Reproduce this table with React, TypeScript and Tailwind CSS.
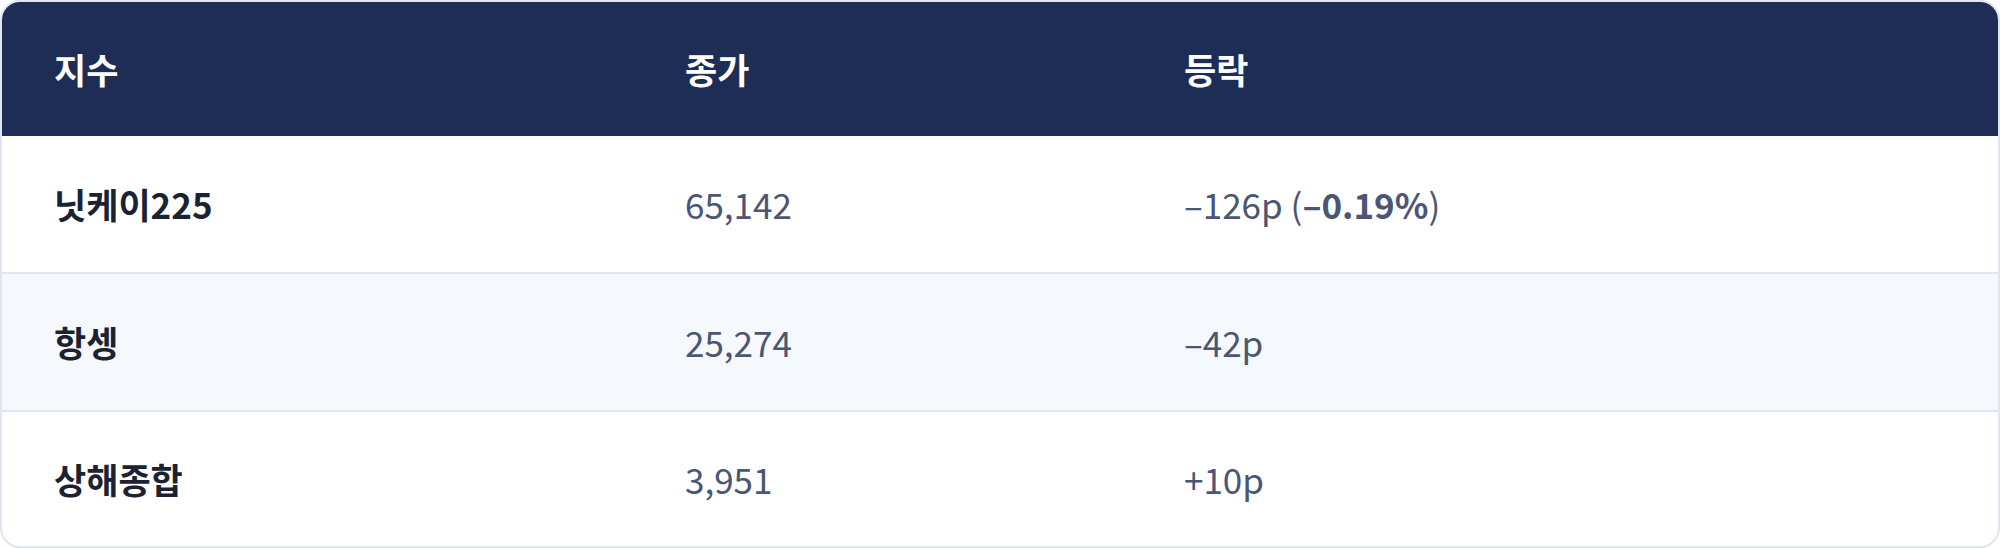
import React from 'react';

type Row = {
  name: string;
  close: string;
  change: React.ReactNode;
};

const ROWS: Row[] = [
  {
    name: '닛케이225',
    close: '65,142',
    change: (
      <>
        –126p (<span className="font-bold">–0.19%</span>)
      </>
    ),
  },
  { name: '항셍', close: '25,274', change: '–42p' },
  { name: '상해종합', close: '3,951', change: '+10p' },
];

const cols = 'grid grid-cols-[631px_499px_1fr] items-center';

const App: React.FC = () => {
  return (
    <div
      className="h-[548px] w-full overflow-hidden rounded-[20px] border-2 border-[#dfe5f1] bg-white flex flex-col"
      style={{ fontFamily: '"Noto Sans CJK KR", "Noto Sans", sans-serif' }}
    >
      {/* header */}
      <div className={`${cols} h-[134px] bg-[#1e2d55] text-white font-bold text-[35px]`}>
        <div className="pl-[52px]">지수</div>
        <div className="pl-[52px]">종가</div>
        <div className="pl-[52px]">등락</div>
      </div>

      {ROWS.map((row, i) => (
        <div
          key={row.name}
          className={`${cols} text-[35px] ${
            i === 0 ? 'h-[136px]' : 'border-t-2 border-[#dfe5f1]'
          } ${i === 1 ? 'h-[138px] bg-[#f5f8fd]' : ''} ${i === 2 ? 'flex-1' : ''}`}
        >
          <div className="pl-[52px] font-bold text-[#1b2333]">{row.name}</div>
          <div className="pl-[52px] text-[#4a5673]">{row.close}</div>
          <div className="pl-[52px] text-[#4a5673]">{row.change}</div>
        </div>
      ))}
    </div>
  );
};

export default App;
